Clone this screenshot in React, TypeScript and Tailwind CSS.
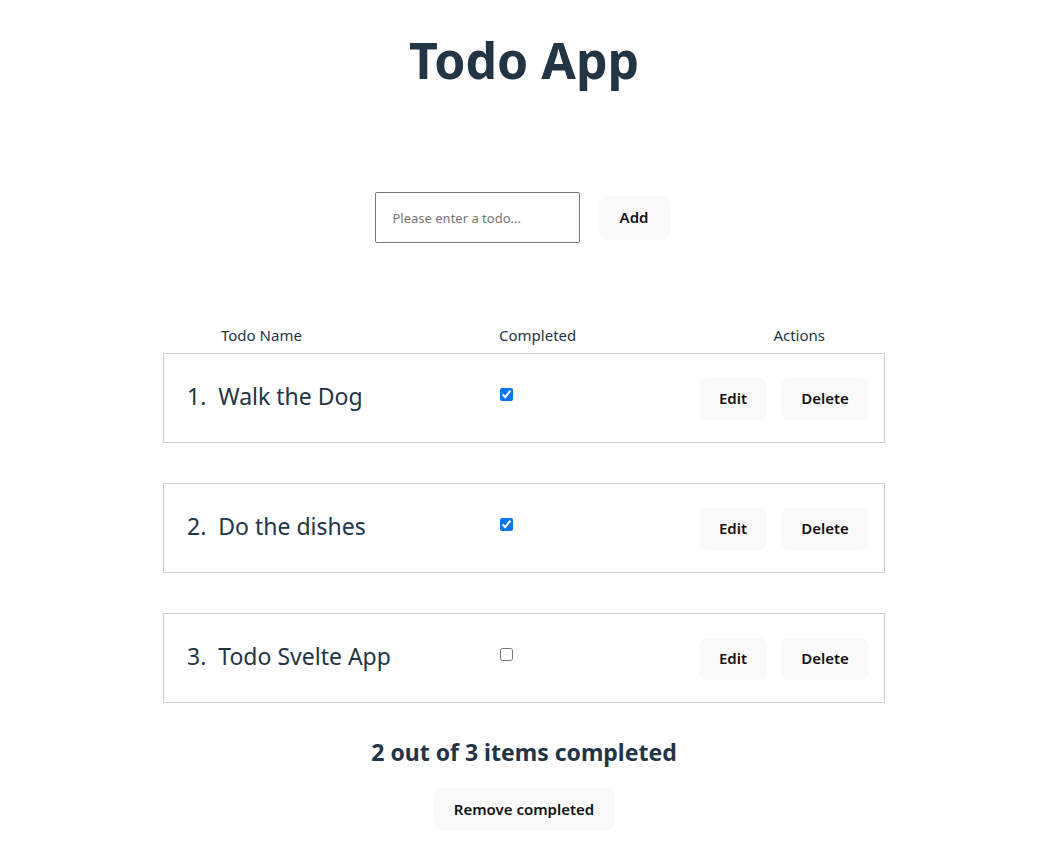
import React from "react";

const todos = [
  { id: 1, name: "Walk the Dog", done: true },
  { id: 2, name: "Do the dishes", done: true },
  { id: 3, name: "Todo Svelte App", done: false },
];

const btn =
  "bg-[#f9f9f9] rounded-[8px] font-semibold text-[15px] text-[#111] border border-transparent";

export default function App() {
  return (
    <div
      className="min-h-[842px] w-full bg-white text-[#213547]"
      style={{ fontFamily: '"Segoe UI", "Noto Sans", "Open Sans", sans-serif' }}
    >
      <div className="flex flex-col items-center pr-[8px]">
        <h1 className="mt-[30px] text-[50px] leading-[60px] font-bold text-[#213547]">Todo App</h1>

        <div className="mt-[102px] flex items-center gap-[19px] pr-[4px]">
          <input
            className="w-[205px] h-[51px] border border-[#767676] rounded-[2px] px-[17px] text-[13px] placeholder:text-[#757575] outline-none"
            placeholder="Please enter a todo..."
          />
          <button className={`${btn} w-[71px] h-[44px]`}>Add</button>
        </div>

        <div className="mt-[77px] w-[722px]">
          <div className="flex items-center h-[30px] text-[15px] pl-[58px] pr-[60px]">
            <span className="w-[278px] text-left">Todo Name</span>
            <span>Completed</span>
            <span className="ml-auto">Actions</span>
          </div>
          <div className="flex flex-col gap-[40px] mt-[3px]">
            {todos.map((t) => (
              <div
                key={t.id}
                className="h-[90px] border border-[#d0d0d0] flex items-center pl-[23px] pr-[15px]"
              >
                <div className="w-[313px] text-[23px] text-[#213547] text-left -mt-[3px]">
                  {t.id}.&nbsp; {t.name}
                </div>
                <input
                  type="checkbox"
                  defaultChecked={t.done}
                  className="w-[13px] h-[13px] -mt-[7px] accent-[#0075ff]"
                />
                <div className="ml-auto flex gap-[14px] mt-[1px]">
                  <button className={`${btn} w-[68px] h-[42px]`}>Edit</button>
                  <button className={`${btn} w-[88px] h-[42px]`}>Delete</button>
                </div>
              </div>
            ))}
          </div>
        </div>

        <div className="mt-[32px] text-[23px] font-bold leading-[34px]">2 out of 3 items completed</div>
        <button className={`${btn} mt-[19px] w-[181px] h-[42px]`}>Remove completed</button>
      </div>
    </div>
  );
}
